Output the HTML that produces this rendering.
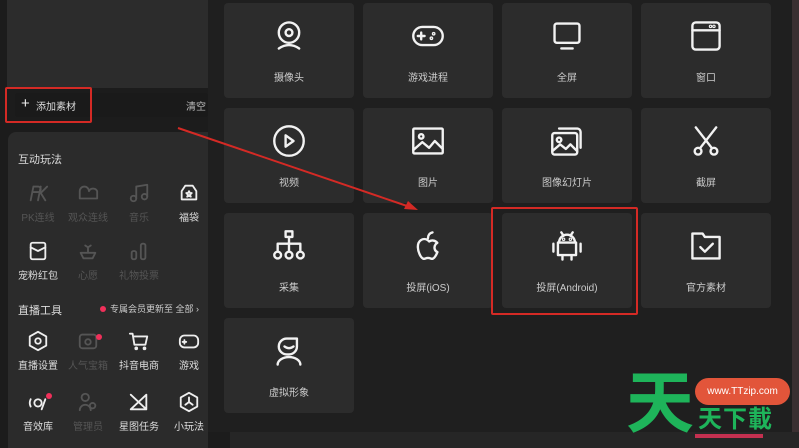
<!DOCTYPE html>
<html><head><meta charset="utf-8"><style>
*{margin:0;padding:0;box-sizing:border-box}
body{width:799px;height:448px;overflow:hidden;background:#1c1c1c;position:relative;font-family:"Liberation Sans","Noto Sans CJK SC",sans-serif;color:#ddd}
.a{position:absolute}
.tile{position:absolute;width:130px;height:95px;background:#2c2c2c;border-radius:4px}
.tile svg{position:absolute;left:48px;top:16px;width:34px;height:34px;fill:none;stroke:#f2f2f2;stroke-width:2.1;stroke-linecap:round;stroke-linejoin:round}
.tile span{position:absolute;left:0;right:0;top:66px;text-align:center;font-size:10px;color:#ccc}
.li{position:absolute;width:50px;text-align:center;font-size:10px}
.li svg{display:block;margin:0 auto 5px;width:22px;height:22px;fill:none;stroke-width:2;stroke-linecap:round;stroke-linejoin:round}
.on{color:#ddd}.on svg{stroke:#eee}.off{color:#555}.off svg{stroke:#555}
</style></head><body>
<div class="a" style="left:7px;top:0;width:201px;height:88px;background:#2c2c2c"></div>
<div class="a" style="left:15px;top:93px;width:193px;height:24px;background:#1a1a1a;border-radius:3px"></div>
<div class="a" style="left:21px;top:95px;font-size:15px;color:#eee">+</div>
<div class="a" style="left:36px;top:98px;font-size:10px;color:#ddd">添加素材</div>
<div class="a" style="left:186px;top:98px;font-size:10px;color:#bbb">清空</div>
<div class="a" style="left:5px;top:87px;width:87px;height:36px;border:2px solid #d42a25;border-radius:2px"></div>
<div class="a" style="left:8px;top:132px;width:200px;height:316px;background:#2b2b2b;border-radius:8px 0 0 0"></div>
<div class="a" style="left:18px;top:151px;font-size:11px;color:#ddd">互动玩法</div>
<div class="li off" style="left:13px;top:182px"><svg viewBox="0 0 24 24"><path d="M4 20L7 5h5a3 3 0 010 6H6M15 5l-3 15M22 5l-7 7 5 8"/></svg>PK连线</div>
<div class="li off" style="left:63px;top:182px"><svg viewBox="0 0 24 24"><path d="M3 18V10a5 5 0 0110 0 5 5 0 019 0v8H3z"/></svg>观众连线</div>
<div class="li off" style="left:114px;top:182px"><svg viewBox="0 0 24 24"><circle cx="6" cy="18" r="3"/><circle cx="18" cy="16" r="3"/><path d="M9 18V5l12-2v13"/></svg>音乐</div>
<div class="li on" style="left:164px;top:182px"><svg viewBox="0 0 24 24"><path d="M8 4h8l4 6v9H4v-9z"/><path d="M12 10l1 2h2l-2 2 1 2-2-1-2 1 1-2-2-2h2z"/></svg>福袋</div>
<div class="li on" style="left:13px;top:240px"><svg viewBox="0 0 24 24"><rect x="4" y="3" width="16" height="18" rx="2"/><path d="M4 8l8 4 8-4"/></svg>宠粉红包</div>
<div class="li off" style="left:63px;top:240px"><svg viewBox="0 0 24 24"><path d="M4 14h16l-3 6H7zM12 14V8M9 6l3 2 3-2"/></svg>心愿</div>
<div class="li off" style="left:114px;top:240px"><svg viewBox="0 0 24 24"><rect x="4" y="12" width="5" height="9" rx="2"/><rect x="14" y="4" width="5" height="17" rx="2"/></svg>礼物投票</div>
<div class="a" style="left:18px;top:302px;font-size:11px;color:#ddd">直播工具</div>
<div class="a" style="left:100px;top:306px;width:6px;height:6px;border-radius:50%;background:#f0305a"></div>
<div class="a" style="left:110px;top:302px;font-size:9px;color:#ccc">专属会员更新至 全部 ›</div>
<div class="li on" style="left:13px;top:330px"><svg viewBox="0 0 24 24"><path d="M12 2l9 5v10l-9 5-9-5V7z"/><circle cx="12" cy="12" r="3"/></svg>直播设置</div>
<div class="li off" style="left:63px;top:330px"><svg viewBox="0 0 24 24"><rect x="3" y="5" width="18" height="15" rx="3"/><circle cx="12" cy="13" r="3"/></svg>人气宝箱</div>
<div class="a" style="left:96px;top:334px;width:6px;height:6px;border-radius:50%;background:#f0305a"></div>
<div class="li on" style="left:114px;top:330px"><svg viewBox="0 0 24 24"><path d="M2 4h3l2 12h12l2-9H7"/><circle cx="9" cy="20" r="1"/><circle cx="18" cy="20" r="1"/></svg>抖音电商</div>
<div class="li on" style="left:164px;top:330px"><svg viewBox="0 0 24 24"><rect x="2" y="6" width="20" height="13" rx="5"/><path d="M7 11v4M5 13h4"/></svg>游戏</div>
<div class="li on" style="left:13px;top:391px"><svg viewBox="0 0 24 24"><circle cx="12" cy="13" r="4"/><path d="M4 9a9 9 0 000 8M20 9l-4 11"/></svg>音效库</div>
<div class="a" style="left:46px;top:393px;width:6px;height:6px;border-radius:50%;background:#f0305a"></div>
<div class="li off" style="left:63px;top:391px"><svg viewBox="0 0 24 24"><circle cx="9" cy="7" r="4"/><path d="M3 21a6 6 0 0112 0"/><circle cx="17" cy="16" r="3"/></svg>管理员</div>
<div class="li on" style="left:114px;top:391px"><svg viewBox="0 0 24 24"><path d="M3 20L20 4v16zM3 4l17 16"/></svg>星图任务</div>
<div class="li on" style="left:164px;top:391px"><svg viewBox="0 0 24 24"><path d="M12 2l9 5v10l-9 5-9-5V7z"/><path d="M12 12V7M12 12l-4 3M12 12l4 3"/></svg>小玩法</div>

<div class="a" style="left:208px;top:0;width:584px;height:432px;background:#1f1f1f"></div>
<div class="a" style="left:230px;top:432px;width:569px;height:16px;background:#262626"></div>
<div class="a" style="left:792px;top:0;width:7px;height:432px;background:#3a2f31"></div>

<div class="tile" style="left:224px;top:3px"><svg viewBox="0 0 30 30"><circle cx="15" cy="12" r="9"/><circle cx="15" cy="12" r="3"/><path d="M6 26q9-6 18 0"/></svg><span>摄像头</span></div>
<div class="tile" style="left:363px;top:3px"><svg viewBox="0 0 30 30"><rect x="2" y="7" width="26" height="16" rx="8"/><path d="M9 12v6M6 15h6"/><circle cx="20" cy="13" r=".6"/><circle cx="18" cy="17" r=".6"/></svg><span>游戏进程</span></div>
<div class="tile" style="left:502px;top:3px"><svg viewBox="0 0 30 30"><rect x="4" y="4" width="22" height="17" rx="2"/><path d="M10 26h10"/></svg><span>全屏</span></div>
<div class="tile" style="left:641px;top:3px"><svg viewBox="0 0 30 30"><rect x="3" y="3" width="24" height="24" rx="3"/><path d="M3 10h24"/><circle cx="19" cy="6.5" r=".5"/><circle cx="22" cy="6.5" r=".5"/></svg><span>窗口</span></div>
<div class="tile" style="left:224px;top:108px"><svg viewBox="0 0 30 30"><circle cx="15" cy="15" r="13"/><path d="M12 10l7 5-7 5z"/></svg><span>视频</span></div>
<div class="tile" style="left:363px;top:108px"><svg viewBox="0 0 30 30"><rect x="2" y="4" width="26" height="22" rx="1"/><circle cx="9" cy="11" r="2"/><path d="M2 23l8-7 6 5 5-6 7 7"/></svg><span>图片</span></div>
<div class="tile" style="left:502px;top:108px"><svg viewBox="0 0 30 30"><path d="M8 4h16a3 3 0 013 3v14"/><rect x="2" y="8" width="22" height="19" rx="2"/><circle cx="8" cy="14" r="2"/><path d="M2 24l7-6 5 4 4-4 6 6"/></svg><span>图像幻灯片</span></div>
<div class="tile" style="left:641px;top:108px"><svg viewBox="0 0 30 30"><path d="M6 3l14 18M24 3L10 21"/><circle cx="8" cy="24" r="3"/><circle cx="22" cy="24" r="3"/></svg><span>截屏</span></div>
<div class="tile" style="left:224px;top:213px"><svg viewBox="0 0 30 30"><rect x="12" y="2" width="6" height="5"/><path d="M15 7v6M5 19v-6h20v6M15 13v6"/><circle cx="5" cy="23" r="3"/><circle cx="15" cy="23" r="3"/><circle cx="25" cy="23" r="3"/></svg><span>采集</span></div>
<div class="tile" style="left:363px;top:213px"><svg viewBox="0 0 30 30"><path d="M15 10c-2 -1.5 -4.5-1.5-6.5 0C5 12.5 5.5 19 8.5 24c1.2 2 2.8 2.8 4.3 2 1.5-.7 2.9-.7 4.400 0 1.500.8 3.100 0 4.300-2 .8-1.300 1.400-2.500 1.800-3.600-2.500-1-3.500-4.500-1.500-7 .4-.5.9-.9 1.400-1.200-2-2.500-5-2.500-7.200-1.200z"/><path d="M15 8c0-2.500 1.500-4.500 4-5"/></svg><span>投屏(iOS)</span></div>
<div class="tile" style="left:502px;top:213px"><svg viewBox="0 0 30 30"><path d="M8 12a7 7 0 0114 0zM7 12h16v11H7zM10 3l2 3M20 3l-2 3M3 13v7M27 13v7M11 23v4M19 23v4"/><circle cx="12" cy="9" r=".5"/><circle cx="18" cy="9" r=".5"/></svg><span>投屏(Android)</span></div>
<div class="tile" style="left:641px;top:213px"><svg viewBox="0 0 30 30"><path d="M3 4h9l2 3h13v19H3z"/><path d="M10 16l4 4 7-7"/></svg><span>官方素材</span></div>
<div class="tile" style="left:224px;top:318px"><svg viewBox="0 0 30 30"><path d="M22 4H13a7 7 0 000 14h2a7 7 0 007-7zM11 11q4 3 8 0M5 27a6 4 0 0120 0"/></svg><span>虚拟形象</span></div>

<div class="a" style="left:491px;top:207px;width:147px;height:108px;border:2px solid #d42a25;border-radius:2px"></div>
<svg class="a" style="left:0;top:0" width="799" height="448"><line x1="178" y1="128" x2="410" y2="207" stroke="#d42a25" stroke-width="2"/><path d="M418 210l-14-1 4-8z" fill="#d42a25"/></svg>

<div class="a" style="left:626px;top:370px;font-size:68px;line-height:68px;font-weight:bold;color:#1eb45a">天</div>
<div class="a" style="left:695px;top:378px;width:95px;height:27px;border-radius:14px;background:#e2553a;color:#fff;font-size:10px;line-height:27px;text-align:center">www.TTzip.com</div>
<div class="a" style="left:698px;top:405px;font-size:24px;line-height:30px;font-weight:bold;color:#1eb45a;letter-spacing:1px">天下載</div>
<div class="a" style="left:695px;top:434px;width:68px;height:4px;background:#c43050"></div>
</body></html>
